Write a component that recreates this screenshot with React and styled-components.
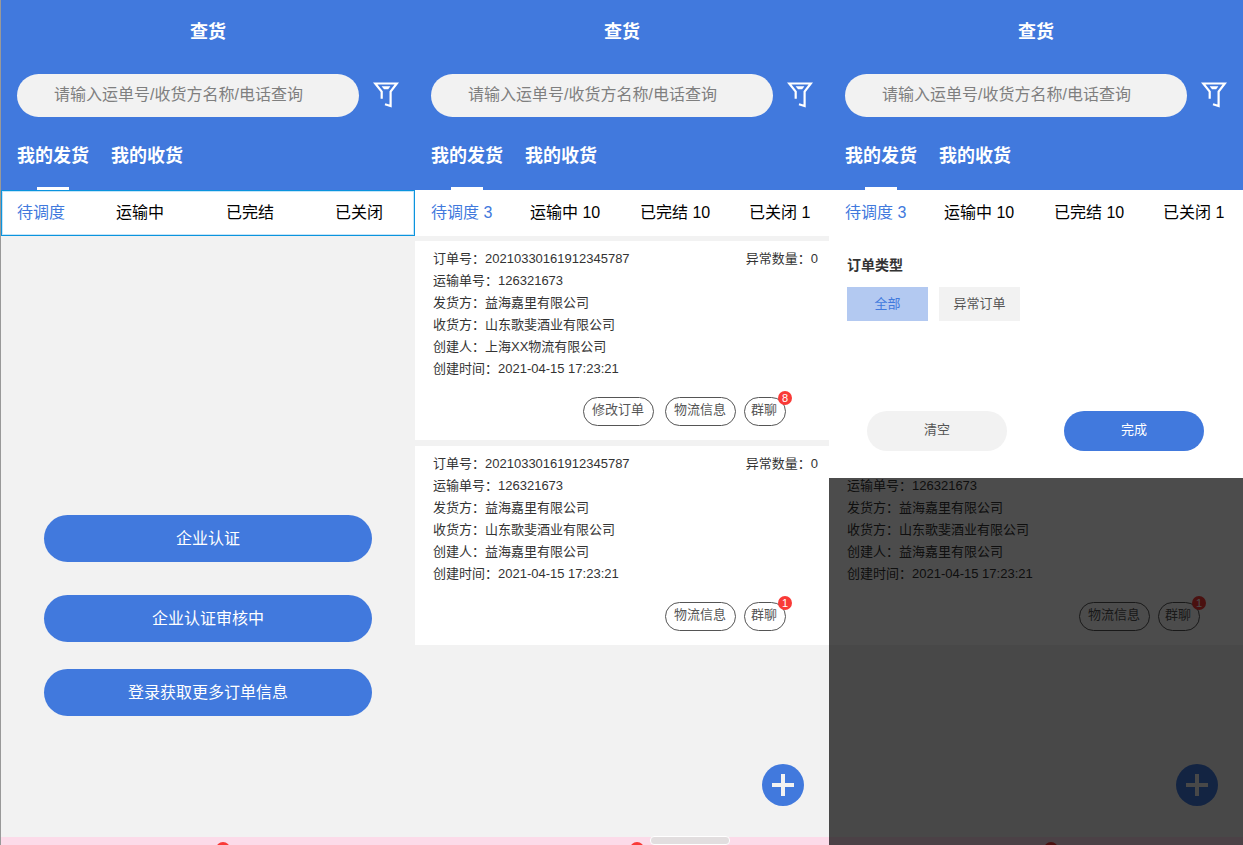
import { useState } from 'react'
import styled, { createGlobalStyle, css } from 'styled-components'

const BLUE = '#4179dd'
const GREY = '#f2f2f2'

const GlobalStyle = createGlobalStyle`
    * {
        box-sizing: border-box;
    }

    body {
        margin: 0;
        background-color: ${GREY};
    }

    body, button, input {
        font-family: "Liberation Sans", "Noto Sans CJK SC", sans-serif;
    }

    button {
        margin: 0;
        padding: 0;
        border: none;
        background: none;
        cursor: pointer;
    }
`

const Board = styled.div`
    display: grid;
    grid-template-columns: repeat(3, minmax(0, 1fr));
    min-height: 100vh;
    border-left: 1px solid #999;
`

const Screen = styled.section`
    position: relative;
    display: flex;
    flex-direction: column;
    min-height: 100vh;
    overflow: hidden;
    background-color: ${GREY};
`

const Header = styled.header`
    display: flex;
    flex-direction: column;
    padding: 0 16px;
    background-color: ${BLUE};
    color: #fff;
`

const Title = styled.h1`
    margin: 0;
    padding: 19px 0 29px;
    font-size: 18px;
    line-height: 26px;
    text-align: center;
`

const SearchRow = styled.form`
    display: flex;
    align-items: center;
    gap: 14px;
`

const SearchInput = styled.input`
    flex: 1;
    min-width: 0;
    height: 43px;
    padding: 0 37px 2px;
    border: none;
    border-radius: 22px;
    background-color: ${GREY};
    color: #333;
    font-size: 16px;
    outline: none;

    &::placeholder {
        color: #7f7f7f;
        opacity: 1;
    }
`

const FilterButton = styled.button`
    display: flex;
    width: 26px;
    height: 27px;
`

const MainTabs = styled.nav`
    display: flex;
    gap: 22px;
    height: 73px;
`

const MainTab = styled.button`
    display: flex;
    flex-direction: column;
    align-items: center;
    justify-content: space-between;
    padding-top: 26px;
    color: #fff;
    font-size: 18px;
    font-weight: bold;
    line-height: 26px;

    &::after {
        content: "";
        width: 32px;
        height: 3px;
        background-color: ${({ $active }) => ($active ? '#fff' : 'transparent')};
    }
`

const StatusTabs = styled.nav`
    display: grid;
    grid-template-columns: 99fr 110fr 109fr 80fr;
    height: 46px;
    padding-left: 16px;
    background-color: #fff;
    ${({ $selected }) => $selected && css`
        box-shadow: inset 0 0 0 1px #0b94de, inset 0 0 0 2px #c5e5f8;
    `}
`

const StatusTab = styled.button`
    padding-bottom: 1px;
    color: ${({ $active }) => ($active ? BLUE : '#000')};
    font-size: 16px;
    line-height: 24px;
    text-align: left;
    white-space: nowrap;
`

const Main = styled.main`
    position: relative;
    display: flex;
    flex: 1;
    flex-direction: column;
`

const AuthActions = styled.div`
    display: flex;
    flex: 1;
    flex-direction: column;
    gap: 27px;
    padding: 279px 43px 0;
`

const AuthButton = styled.button`
    height: 47px;
    padding-bottom: 4px;
    border-radius: 24px;
    background-color: ${BLUE};
    color: #fff;
    font-size: 16px;

    &:first-child {
        margin-bottom: 6px;
    }
`

const OrderList = styled.div`
    display: flex;
    flex: 1;
    flex-direction: column;
    gap: 6px;
    padding-top: 5px;
`

const Card = styled.article`
    padding: 7px 11px 14px 18px;
    background-color: #fff;
    color: #333;
    font-size: 13px;
    line-height: 22px;
    visibility: ${({ $covered }) => ($covered ? 'hidden' : 'visible')};
`

const CardRow = styled.div`
    display: flex;
    justify-content: space-between;
    height: 22px;
`

const CardActions = styled.div`
    display: flex;
    justify-content: flex-end;
    gap: 8px;
    padding: 17px 32px 0 0;
`

const PillButton = styled.button`
    position: relative;
    height: 29px;
    padding: ${({ $small }) => ($small ? '0 8px 3px 6px' : '0 9px 3px 8px')};
    border: 1px solid #555;
    border-radius: 15px;
    color: #555;
    font-size: 13px;
    line-height: 22px;

    &:nth-last-child(3) {
        margin-right: 3px;
    }
`

const Badge = styled.span`
    position: absolute;
    top: -7px;
    right: -7px;
    width: 14px;
    height: 14px;
    border-radius: 50%;
    background-color: #f93a37;
    color: #fff;
    font-size: 11px;
    line-height: 14px;
    text-align: center;
`

const AddButton = styled.button`
    position: absolute;
    right: 25px;
    bottom: 39px;
    display: flex;
    align-items: center;
    justify-content: center;
    width: 42px;
    height: 42px;
    border-radius: 50%;
    background-color: ${BLUE};
`

const BottomBar = styled.footer`
    position: relative;
    height: 8px;
    background-color: #fcdbe9;
`

const BarDot = styled.span`
    position: absolute;
    top: 5px;
    left: 52%;
    width: 14px;
    height: 14px;
    border-radius: 50%;
    background-color: #f93a37;
`

const BarHandle = styled.span`
    position: absolute;
    top: -1px;
    left: 235px;
    width: 80px;
    height: 9px;
    border: 1px solid #fff;
    border-radius: 4px;
    background-color: #e2dedf;
`

const Overlay = styled.div`
    position: absolute;
    inset: 0;
    display: flex;
    flex-direction: column;
`

const Mask = styled.div`
    flex: 1;
    background-color: rgba(0, 0, 0, 0.7);
`

const FilterPanel = styled.div`
    padding: 18px 18px 27px;
    background-color: #fff;
`

const FilterTitle = styled.h2`
    margin: 0;
    color: #333;
    font-size: 14px;
    line-height: 22px;
`

const Chips = styled.div`
    display: flex;
    gap: 11px;
    padding: 11px 0 90px;
`

const Chip = styled.button`
    width: 81px;
    height: 34px;
    padding-bottom: 4px;
    background-color: ${({ $active }) => ($active ? '#b3c9f1' : GREY)};
    color: ${({ $active }) => ($active ? BLUE : '#555')};
    font-size: 13px;
`

const FilterActions = styled.div`
    display: flex;
    justify-content: space-between;
    padding: 0 21px 0 20px;
`

const FilterAction = styled.button`
    width: 140px;
    height: 40px;
    padding-bottom: 5px;
    border-radius: 20px;
    background-color: ${({ $primary }) => ($primary ? BLUE : GREY)};
    color: ${({ $primary }) => ($primary ? '#fff' : '#555')};
    font-size: 13px;
`

const FunnelIcon = () => (
    <svg width="26" height="27" viewBox="0 0 26 27" fill="none" stroke="#fff" aria-hidden="true">
        <path d="M8.7 16.8V9.6L2.2 1.5H23.8L17.6 9.6V24L12 22.2" strokeWidth="2.2" />
        <path d="M8.6 4.2H17.4L15.2 7.2H11Z" fill="#fff" stroke="none" />
    </svg>
)

const PlusIcon = () => (
    <svg width="22" height="22" viewBox="0 0 22 22" stroke={GREY} strokeWidth="4" aria-hidden="true">
        <path d="M11 0V22M0 11H22" />
    </svg>
)

const authActions = ['企业认证', '企业认证审核中', '登录获取更多订单信息']

const emptyStatuses = ['待调度', '运输中', '已完结', '已关闭']
const countedStatuses = ['待调度 3', '运输中 10', '已完结 10', '已关闭 1']

const orders = [
    { creator: '上海XX物流有限公司', editable: true, messages: 8 },
    { creator: '益海嘉里有限公司', editable: false, messages: 1 },
]

const ScreenHeader = () => {
    const [tab, setTab] = useState(0)
    return (
        <Header>
            <Title>查货</Title>
            <SearchRow onSubmit={(e) => e.preventDefault()}>
                <SearchInput
                    type="text"
                    aria-label="查询"
                    placeholder="请输入运单号/收货方名称/电话查询"
                />
                <FilterButton type="button" aria-label="筛选"><FunnelIcon /></FilterButton>
            </SearchRow>
            <MainTabs>
                {['我的发货', '我的收货'].map((name, i) => (
                    <MainTab key={name} $active={tab === i} onClick={() => setTab(i)}>{name}</MainTab>
                ))}
            </MainTabs>
        </Header>
    )
}

const StatusBar = ({ statuses, selected }) => {
    const [current, setCurrent] = useState(0)
    return (
        <StatusTabs $selected={selected}>
            {statuses.map((status, i) => (
                <StatusTab key={status} $active={current === i} onClick={() => setCurrent(i)}>
                    {status}
                </StatusTab>
            ))}
        </StatusTabs>
    )
}

const OrderCard = ({ order, covered }) => (
    <Card $covered={covered}>
        <CardRow>
            <span>订单号：20210330161912345787</span>
            <span>异常数量：0</span>
        </CardRow>
        <CardRow>运输单号：126321673</CardRow>
        <CardRow>发货方：益海嘉里有限公司</CardRow>
        <CardRow>收货方：山东歌斐酒业有限公司</CardRow>
        <CardRow>创建人：{order.creator}</CardRow>
        <CardRow>创建时间：2021-04-15 17:23:21</CardRow>
        <CardActions>
            {order.editable && <PillButton>修改订单</PillButton>}
            <PillButton>物流信息</PillButton>
            <PillButton $small>
                群聊
                <Badge>{order.messages}</Badge>
            </PillButton>
        </CardActions>
    </Card>
)

// the filter panel lies over the first card, so it is hidden while the panel is open
const Orders = ({ filterOpen }) => (
    <>
        <OrderList>
            {orders.map((order, i) => (
                <OrderCard key={order.creator} order={order} covered={filterOpen && i === 0} />
            ))}
        </OrderList>
        <AddButton aria-label="新增"><PlusIcon /></AddButton>
    </>
)

const OrderFilter = () => {
    const [type, setType] = useState('全部')
    return (
        <Overlay>
            <FilterPanel>
                <FilterTitle>订单类型</FilterTitle>
                <Chips>
                    {['全部', '异常订单'].map((name) => (
                        <Chip
                            key={name}
                            $active={type === name}
                            aria-pressed={type === name}
                            onClick={() => setType(name)}
                        >
                            {name}
                        </Chip>
                    ))}
                </Chips>
                <FilterActions>
                    <FilterAction onClick={() => setType('全部')}>清空</FilterAction>
                    <FilterAction $primary>完成</FilterAction>
                </FilterActions>
            </FilterPanel>
            <Mask />
        </Overlay>
    )
}

const App = () => {
    return (
        <>
            <GlobalStyle />
            <Board>
                <Screen>
                    <ScreenHeader />
                    <StatusBar statuses={emptyStatuses} selected />
                    <Main>
                        <AuthActions>
                            {authActions.map((name) => <AuthButton key={name}>{name}</AuthButton>)}
                        </AuthActions>
                        <BottomBar><BarDot /></BottomBar>
                    </Main>
                </Screen>
                <Screen>
                    <ScreenHeader />
                    <StatusBar statuses={countedStatuses} />
                    <Main>
                        <Orders />
                        <BottomBar>
                            <BarDot />
                            <BarHandle />
                        </BottomBar>
                    </Main>
                </Screen>
                <Screen>
                    <ScreenHeader />
                    <StatusBar statuses={countedStatuses} />
                    <Main>
                        <Orders filterOpen />
                        <BottomBar><BarDot /></BottomBar>
                        <OrderFilter />
                    </Main>
                </Screen>
            </Board>
        </>
    )
}

export default App
